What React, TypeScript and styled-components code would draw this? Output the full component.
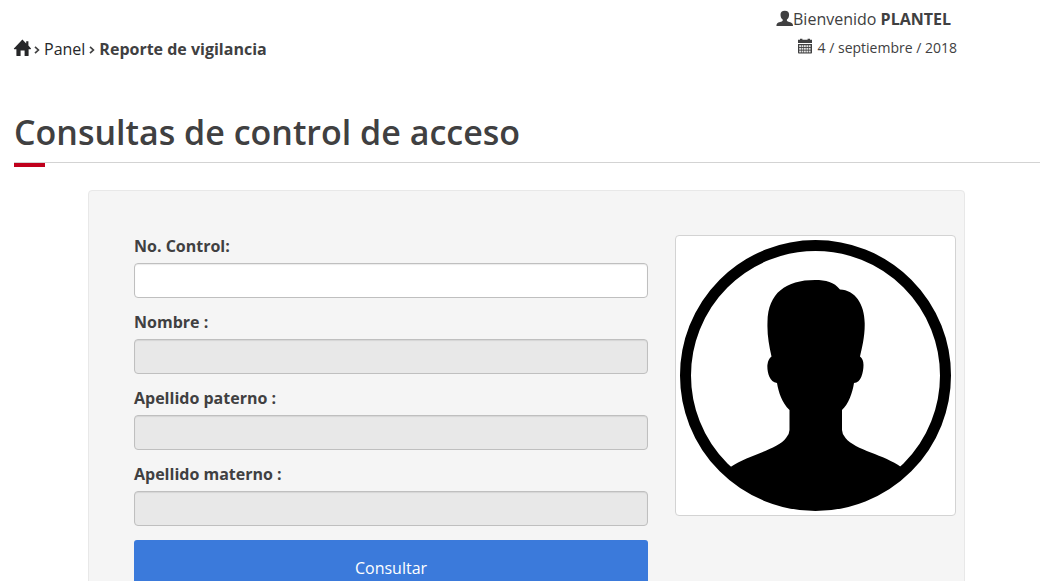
import React from "react";
import styled, { createGlobalStyle } from "styled-components";

const GlobalStyle = createGlobalStyle`
  html { scrollbar-width: none; }
  *, *::before, *::after { box-sizing: border-box; }
  body {
    margin: 0;
    background: #fff;
    color: #404041;
    font-family: "Open Sans", "Noto Sans", sans-serif;
    font-size: 16px;
    line-height: 22px;
  }
`;

const Page = styled.div`
  padding: 8px 11px 40px 14px;
`;

const Account = styled.div`
  display: flex;
  justify-content: flex-end;
  align-items: flex-start;
  padding-right: 89px;
`;

const SubHeader = styled.div`
  display: flex;
  justify-content: space-between;
  align-items: flex-start;
  margin-top: 7px;
  padding-right: 83px;
`;

const Breadcrumb = styled.nav`
  display: flex;
  align-items: flex-start;
  padding-top: 1px;
`;

const Crumb = styled.a`
  display: flex;
  color: #262729;
  text-decoration: none;
`;

const Separator = styled.svg`
  width: 6px;
  height: 8px;
  margin: 8px 4px 0;
`;

const Today = styled.time`
  display: flex;
  gap: 4px;
  font-size: 14px;
`;

const Icon = styled.svg`
  flex: none;
  width: 16px;
  height: 16px;
  margin-top: 2px;
  fill: currentColor;
  overflow: visible;
`;

const Title = styled.h1`
  position: relative;
  margin: 47px 0 27px;
  padding-bottom: 5px;
  border-bottom: 1px solid #d3d3d3;
  font-size: 34px;
  font-weight: 600;
  line-height: 50px;

  &::after {
    content: "";
    position: absolute;
    left: 0;
    top: 100%;
    width: 31px;
    height: 4px;
    margin-top: 1px;
    background: #c0001c;
  }
`;

const Panel = styled.section`
  display: flex;
  align-items: flex-start;
  gap: 27px;
  margin: 0 75px 0 74px;
  padding: 44px 8px 44px 45px;
  border: 1px solid #e8e8e8;
  border-radius: 4px;
  background: #f5f5f5;
`;

const Form = styled.form`
  flex: 1;
  min-width: 0;
`;

const Field = styled.div`
  margin-bottom: 13px;
`;

const Label = styled.label`
  display: block;
  margin-bottom: 6px;
  font-weight: 700;
`;

const Input = styled.input`
  display: block;
  width: 100%;
  height: 35px;
  padding: 6px 12px;
  border: 1px solid #bfbfbf;
  border-radius: 4px;
  background: #fff;
  box-shadow: inset 0 1px 1px rgba(0, 0, 0, 0.08);
  font: inherit;
  color: inherit;

  &:disabled {
    background: #e8e8e8;
  }
`;

const Submit = styled.button`
  display: block;
  width: 100%;
  height: 55px;
  margin-top: 14px;
  border: 0;
  border-radius: 3px;
  background: #3b7adb;
  color: #fff;
  font: inherit;
`;

const Photo = styled.figure`
  flex: 0 0 281px;
  margin: 0;
  padding: 4px;
  border: 1px solid #d3d3d3;
  border-radius: 4px;
  background: #fff;

  svg {
    display: block;
    width: 100%;
  }
`;

const HomeIcon = () => (
  <Icon viewBox="0 0 16 16" role="img" aria-label="Inicio">
    <path d="M8.4 -.4 L12.2 3.4 V1.2 H14.4 V5.6 L17 8.4 Q17.1 9.2 16.400 9.200 H14.600 V15.400 Q14.600 16 14 16 H10.600 V10.500 H6.600 V16 H3 Q2.400 16 2.400 15.400 V9.200 H.400 Q-.300 9.200 -.1 8.400 Z" />
  </Icon>
);

const UserIcon = () => (
  <Icon viewBox="0 0 16 16" aria-hidden="true">
    <path d="M7.800 .7 C10.700 .7 12.100 2.300 12.100 4.700 C12.100 6.900 11.200 8.700 9.900 9.600 V10.800 C10.400 11.700 14 12.300 15.300 13.400 Q16 14 16 15.900 H-.6 Q-.6 14 .1 13.400 C1.300 12.300 5.200 11.700 5.700 10.800 V9.600 C4.400 8.700 3.500 6.900 3.500 4.700 C3.500 2.300 4.900 .7 7.800 .7 Z" />
  </Icon>
);

const dayCells = [0, 1, 2, 3, 4].flatMap((col) =>
  [0, 1, 2].map((row) => ({ x: 1.2 + col * 2.4, y: 6.2 + row * 2.7 }))
);

const CalendarIcon = () => (
  <Icon viewBox="0 0 16 16" aria-hidden="true">
    <path d="M2 -.3 H4.400 V.8 H9.600 V-.3 H12 V.8 H14 V4 H0 V.8 H2 Z" />
    <path d="M0 4.900 H14 V13.600 Q14 14.500 13.200 14.500 H.8 Q0 14.500 0 13.600 Z" />
    {dayCells.map(({ x, y }) => (
      <rect key={`${x}-${y}`} x={x} y={y} width="1.8" height="1.8" fill="#e4e4e4" />
    ))}
  </Icon>
);

const Chevron = () => (
  <Separator viewBox="0 0 6 8" aria-hidden="true">
    <path d="M1 .8 L4.400 4 L1 7.200" fill="none" stroke="#404041" strokeWidth="1.7" />
  </Separator>
);

const Silhouette = () => (
  <svg viewBox="0 0 271 271" role="img" aria-label="Foto">
    <circle cx="135.5" cy="135.5" r="130" fill="#fff" stroke="#000" strokeWidth="11" />
    <path d="M50.5 227 C68 215 97 210 106 198 Q109.5 194 109.5 190 V170 C102 163 98.500 152 97 143 C89 142 87 131 87.400 125 Q88 119 91.500 116.500 C89 105 87 95 87.500 82 C88 53 106 40 135 40 C146 40 154 42 160 49.500 C175 50 184.500 64 184.700 83 C185 96 182 108 180 116.500 Q183.500 119 183.500 125 C183.500 132 181 143 174 143 C172.500 153 168.500 164 162 170 L162 190 Q162 194 165.500 198 C175 210 205 215 221 227 L205 246 Q175 268 135.500 268 Q96 268 66 246 Z" />
  </svg>
);

const lockedFields = [
  { id: "nombre", label: "Nombre :" },
  { id: "paterno", label: "Apellido paterno :" },
  { id: "materno", label: "Apellido materno :" },
];

export default function App() {
  return (
    <>
      <GlobalStyle />
      <Page>
        <header>
          <Account>
            <UserIcon />
            <span>
              Bienvenido <strong>PLANTEL</strong>
            </span>
          </Account>
          <SubHeader>
            <Breadcrumb aria-label="Ruta">
              <Crumb href="#inicio">
                <HomeIcon />
              </Crumb>
              <Chevron />
              <Crumb href="#panel">Panel</Crumb>
              <Chevron />
              <strong>Reporte de vigilancia</strong>
            </Breadcrumb>
            <Today dateTime="2018-09-04">
              <CalendarIcon />
              4 / septiembre / 2018
            </Today>
          </SubHeader>
        </header>
        <main>
          <Title>Consultas de control de acceso</Title>
          <Panel>
            <Form onSubmit={(event) => event.preventDefault()}>
              <Field>
                <Label htmlFor="control">No. Control:</Label>
                <Input id="control" type="text" />
              </Field>
              {lockedFields.map(({ id, label }) => (
                <Field key={id}>
                  <Label htmlFor={id}>{label}</Label>
                  <Input id={id} type="text" disabled />
                </Field>
              ))}
              <Submit type="submit">Consultar</Submit>
            </Form>
            <Photo>
              <Silhouette />
            </Photo>
          </Panel>
        </main>
      </Page>
    </>
  );
}
